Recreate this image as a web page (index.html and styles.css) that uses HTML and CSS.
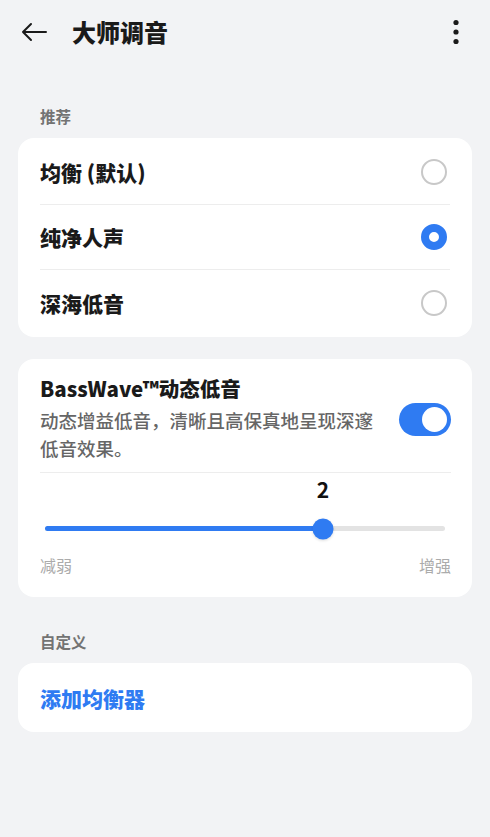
FILE: index.html
```html
<!DOCTYPE html>
<html lang="zh">
<head>
<meta charset="utf-8">
<link rel="stylesheet" href="styles.css">
</head>
<body>
<header class="topbar">
  <svg class="back" width="26" height="20" viewBox="0 0 26 20"><path d="M25 10H2M10 2L2 10L10 18" fill="none" stroke="#1a1a1a" stroke-width="2" stroke-linecap="round" stroke-linejoin="round"/></svg>
  <h1 class="title">大师调音</h1>
  <svg class="more" width="8" height="26" viewBox="0 0 8 26"><circle cx="4" cy="3.5" r="2.6" fill="#1a1a1a"/><circle cx="4" cy="13" r="2.6" fill="#1a1a1a"/><circle cx="4" cy="22.5" r="2.6" fill="#1a1a1a"/></svg>
</header>

<div class="section-label">推荐</div>
<div class="card list">
  <div class="row"><span class="row-text">均衡 (默认)</span><span class="radio"></span></div>
  <div class="row"><span class="row-text">纯净人声</span><span class="radio on"></span></div>
  <div class="row"><span class="row-text">深海低音</span><span class="radio"></span></div>
</div>

<div class="card bass">
  <div class="bass-head">
    <div class="bass-texts">
      <div class="bass-title">BassWave™动态低音</div>
      <div class="bass-sub">动态增益低音，清晰且高保真地呈现深邃低音效果。</div>
    </div>
    <span class="switch"><span class="knob"></span></span>
  </div>
  <div class="slider">
    <div class="value-row"><span class="value" style="left: 69.5%">2</span></div>
    <div class="track"><div class="fill" style="width: 69.5%"></div><span class="thumb" style="left: 69.5%"></span></div>
    <div class="ends"><span>减弱</span><span>增强</span></div>
  </div>
</div>

<div class="section-label second">自定义</div>
<div class="card add">
  <span class="add-text">添加均衡器</span>
</div>
</body>
</html>
```
FILE: styles.css
```css
* { box-sizing: border-box; }
body {
  margin: 0;
  background: #f2f3f5;
  font-family: "Noto Sans CJK SC", "Noto Sans", sans-serif;
  color: #1a1a1a;
}
.topbar {
  height: 64px;
  display: flex;
  align-items: center;
  padding: 0 30px 0 21px;
}
.back { display: block; margin-right: 25px; }
.title {
  margin: 0;
  font-size: 24px;
  font-weight: 900;
  line-height: 32px;
  flex: 1;
  color: #1a1a1a;
}
.more { display: block; }
.section-label {
  margin-top: 40px;
  padding-left: 40px;
  font-size: 15.5px;
  line-height: 24px;
  font-weight: 700;
  color: #737373;
  height: 24px;
}
.section-label.second { margin-top: 32px; }
.card {
  background: #fff;
  border-radius: 16px;
  margin: 0 18px;
}
.list {
  margin-top: 10px;
  padding: 2px 22px;
}
.row {
  height: 65px;
  display: flex;
  align-items: center;
  justify-content: space-between;
  border-bottom: 1px solid #ededed;
}
.row:last-child { border-bottom: none; }
.row-text {
  font-size: 21px;
  font-weight: 800;
  color: #1a1a1a;
}
.radio {
  width: 26px;
  height: 26px;
  border-radius: 50%;
  border: 2px solid #c8c8c8;
  margin-right: 3px;
  background: #fff;
}
.radio.on {
  border: 8px solid #2f7bf2;
  background: #fff;
}
.bass {
  margin-top: 22px;
  padding: 15px 21px 22px 22px;
}
.bass-head {
  display: flex;
  align-items: center;
  border-bottom: 1px solid #ededed;
  padding-bottom: 10px;
}
.bass-texts { flex: 1; padding-right: 20px; }
.bass-title {
  font-size: 20.5px;
  font-weight: 800;
  line-height: 28px;
  color: #1a1a1a;
}
.bass-sub {
  margin-top: 4px;
  font-size: 18.5px;
  line-height: 28px;
  color: #666;
  font-weight: 500;
}
.switch {
  width: 52px;
  height: 33px;
  border-radius: 17px;
  background: #2f7bf2;
  position: relative;
  flex-shrink: 0;
  margin-top: 2px;
}
.knob {
  position: absolute;
  right: 4px;
  top: 4px;
  width: 25px;
  height: 25px;
  border-radius: 50%;
  background: #fff;
}
.slider { padding: 2px 6px 0 5px; }
.value-row {
  position: relative;
  height: 28px;
}
.value {
  position: absolute;
  top: 0;
  transform: translateX(-50%);
  font-size: 21px;
  font-weight: 700;
  line-height: 28px;
  color: #111;
}
.track {
  position: relative;
  margin-top: 23px;
  height: 5px;
  border-radius: 3px;
  background: #e3e3e3;
}
.fill {
  height: 5px;
  border-radius: 3px;
  background: #2f7bf2;
}
.thumb {
  position: absolute;
  top: 50%;
  width: 21px;
  height: 21px;
  border-radius: 50%;
  background: #2f7bf2;
  transform: translate(-50%, -50%);
  box-shadow: 0 1px 3px rgba(0,0,0,0.15);
}
.ends {
  display: flex;
  justify-content: space-between;
  margin: 24px -6px 0 -5px;
  font-size: 16px;
  line-height: 20px;
  color: #ababab;
}
.add {
  margin-top: 10px;
  height: 69px;
  display: flex;
  align-items: center;
  padding: 0 22px;
}
.add-text {
  font-size: 21px;
  font-weight: 800;
  color: #2f7bf2;
}
```
